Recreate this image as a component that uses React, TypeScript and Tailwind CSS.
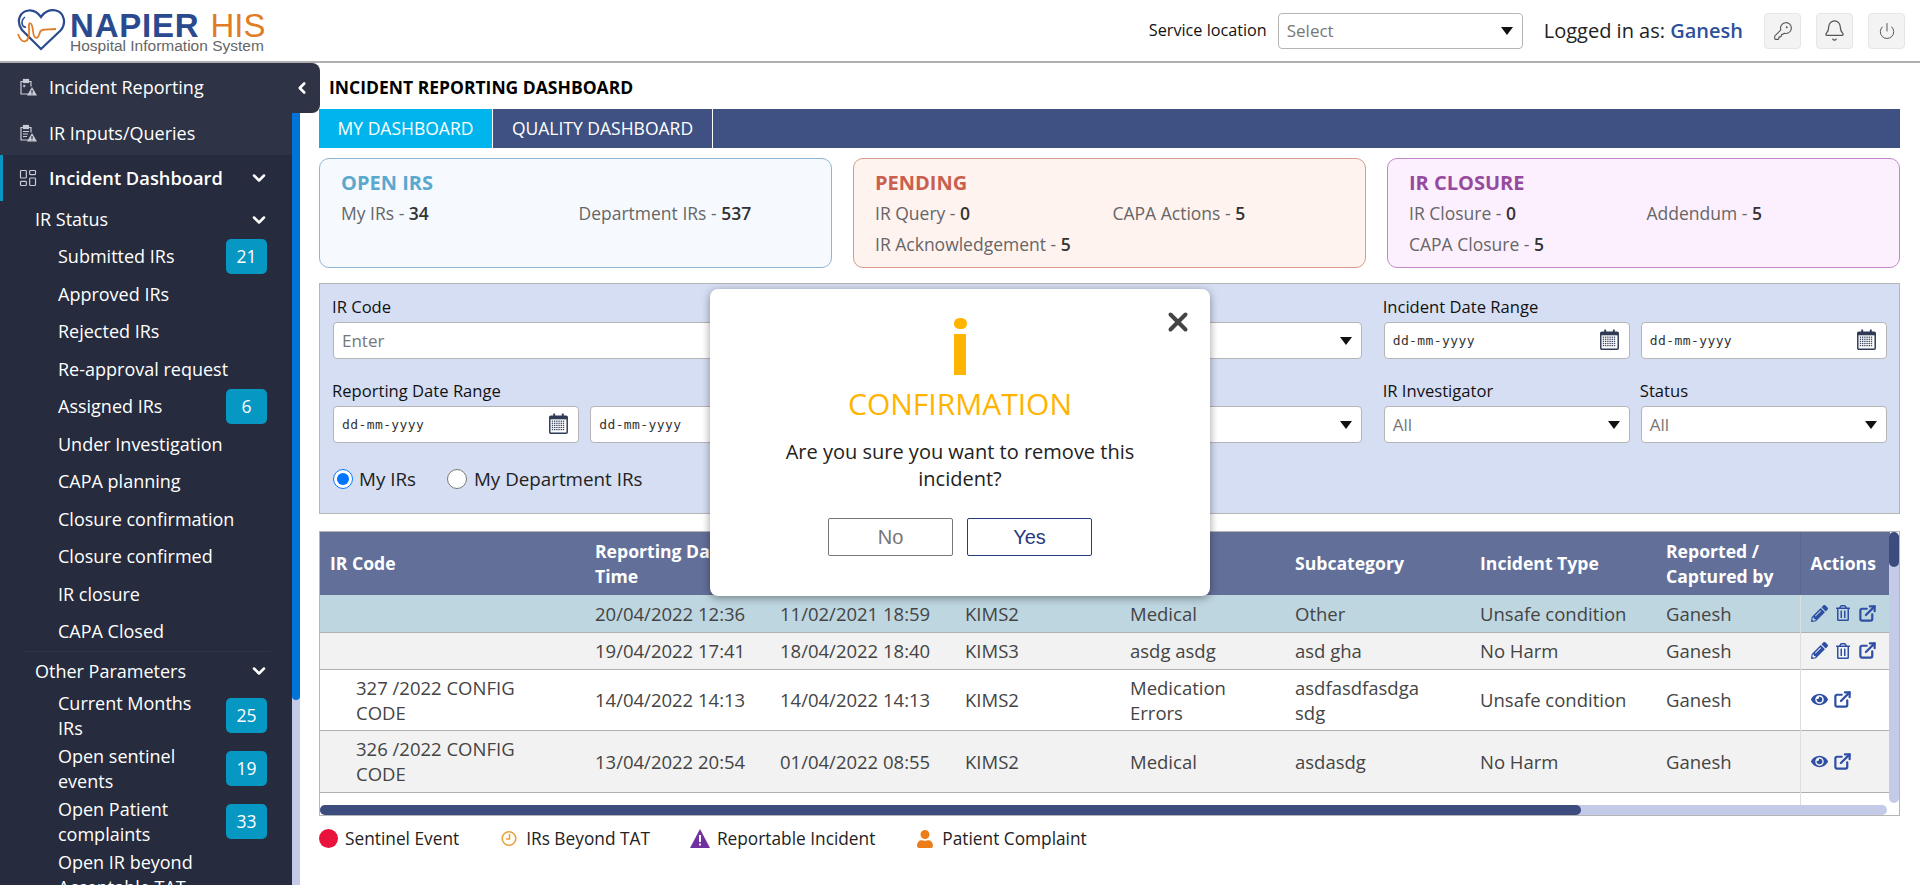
import { Bell, ChevronDown, ChevronLeft, KeyRound, LayoutDashboard, Power, X } from 'lucide-react';
import { FaEye, FaPencilAlt, FaRegTrashAlt, FaUser } from 'react-icons/fa';
import { FiExternalLink } from 'react-icons/fi';

const statusItems = [
  { label: 'Submitted IRs', badge: 21 },
  { label: 'Approved IRs' },
  { label: 'Rejected IRs' },
  { label: 'Re-approval request' },
  { label: 'Assigned IRs', badge: 6 },
  { label: 'Under Investigation' },
  { label: 'CAPA planning' },
  { label: 'Closure confirmation' },
  { label: 'Closure confirmed' },
  { label: 'IR closure' },
  { label: 'CAPA Closed' },
];

const otherItems = [
  { label: 'Current Months IRs', badge: 25 },
  { label: 'Open sentinel events', badge: 19 },
  { label: 'Open Patient complaints', badge: 33 },
  { label: 'Open IR beyond Acceptable TAT' },
];

const rows = [
  { code: '', reported: '20/04/2022 12:36', incident: '11/02/2021 18:59', loc: 'KIMS2', cat: 'Medical', sub: 'Other', type: 'Unsafe condition', bg: 'bg-[#bed6e0] h-[37px]', edit: true },
  { code: '', reported: '19/04/2022 17:41', incident: '18/04/2022 18:40', loc: 'KIMS3', cat: 'asdg asdg', sub: 'asd gha', type: 'No Harm', bg: 'bg-[#f2f2f2] h-[37px]', edit: true },
  { code: '327 /2022 CONFIG CODE', reported: '14/04/2022 14:13', incident: '14/04/2022 14:13', loc: 'KIMS2', cat: 'Medication Errors', sub: 'asdfasdfasdga sdg', type: 'Unsafe condition', bg: 'bg-white h-[61px]', edit: false },
  { code: '326 /2022 CONFIG CODE', reported: '13/04/2022 20:54', incident: '01/04/2022 08:55', loc: 'KIMS2', cat: 'Medical', sub: 'asdasdg', type: 'No Harm', bg: 'bg-[#f2f2f2] h-[62px]', edit: false },
  { code: '325 /2022 CONFIG CODE', reported: '12/04/2022 11:20', incident: '12/04/2022 11:20', loc: 'KIMS2', cat: 'Medical', sub: 'asdasdg', type: 'No Harm', bg: 'bg-white h-[61px]', edit: false },
];

function ClipboardIcon({ lines }: { lines?: boolean }) {
  return (
    <svg width="19" height="19" viewBox="0 0 19 19" fill="none" stroke="#c9ccd6" strokeWidth="1.2">
      <path d="M9 16H2V3.5h10v5" />
      <rect x="4.5" y="1.5" width="5" height="3" fill="#c9ccd6" />
      {lines ? <path d="M4 7.5h6M4 10h5M4 12.5h4" /> : <path d="M4 8h2.5M5.2 6.8v2.4" />}
      <path d="M13 9l5 8.5H8z" fill="#c9ccd6" stroke="none" />
      <path d="M13 12v3M13 15.8v.8" stroke="#2e3345" />
    </svg>
  );
}

function CalendarIcon() {
  const cells = [];
  for (let y = 0; y < 5; y++) {
    for (let x = 0; x < 6; x++) {
      cells.push(<rect key={`${x}-${y}`} x={2.6 + x * 2.1} y={7.2 + y * 2} width="1.3" height="1.2" fill="#3a4560" />);
    }
  }
  return (
    <svg width="19" height="21" viewBox="0 0 18 20" fill="none" className="-mt-[3px]">
      <rect x="0.7" y="3" width="16.6" height="16.3" rx="1" stroke="#2f3a55" strokeWidth="1.4" fill="#fff" />
      <rect x="0.7" y="3" width="16.6" height="3" fill="#2f3a55" />
      <rect x="4" y="0.5" width="1.8" height="4" fill="#2f3a55" />
      <rect x="12.2" y="0.5" width="1.8" height="4" fill="#2f3a55" />
      {cells}
    </svg>
  );
}

function Caret() {
  return (
    <svg width="12" height="8" viewBox="0 0 12 8" className="shrink-0">
      <path d="M0 0h12L6 8z" fill="#111" />
    </svg>
  );
}

function SelectBox({ text, height = 'h-[37px]' }: { text: string; height?: string }) {
  return (
    <div className={`${height} flex items-center justify-between bg-white border border-[#b5b5b5] rounded-[4px] pl-2 pr-[9px] text-[17px] text-[#777]`}>
      <span>{text}</span>
      <Caret />
    </div>
  );
}

function DateBox() {
  return (
    <div className="h-[37px] flex-1 min-w-0 flex items-center justify-between bg-white border border-[#b5b5b5] rounded-[4px] pl-2 pr-[10px]">
      <span className="font-['DejaVu_Sans_Mono',monospace] text-[13px] text-[#333] tracking-[0.4px]">dd-mm-yyyy</span>
      <CalendarIcon />
    </div>
  );
}

function Field({ label, children }: { label: string; children: React.ReactNode }) {
  return (
    <div className="flex flex-col">
      <label className="h-[22px] mb-[4px] -ml-px leading-[22px] text-[16.6px] font-medium text-[#111] whitespace-nowrap">{label}</label>
      {children}
    </div>
  );
}

function SummaryCard({ title, items, cls, titleCls }: { title: string; items: [string, number][]; cls: string; titleCls: string }) {
  return (
    <div className={`h-[110px] rounded-[10px] border pl-[21px] pr-[15px] pt-[11px] ${cls}`}>
      <h2 className={`text-[20px] leading-[26px] font-bold ${titleCls}`}>{title}</h2>
      <div className="grid grid-cols-2 mt-[2px]">
        {items.map(([k, v]) => (
          <p key={k} className="h-[31px] leading-[31px] text-[17.5px] text-[#666] whitespace-nowrap">
            {k} - <b className="font-semibold text-[#333]">{v}</b>
          </p>
        ))}
      </div>
    </div>
  );
}

function SideSubItem({ label, badge }: { label: string; badge?: number }) {
  return (
    <div className="flex items-center justify-between pl-[58px] pr-[25px] min-h-[37.5px] text-[18px] leading-[25px] text-white">
      <span className={badge !== undefined ? 'w-[155px]' : 'w-[205px]'}>{label}</span>
      {badge !== undefined && (
        <span className="w-[41px] h-[35px] flex items-center justify-center rounded-[5px] bg-[#0797c3] text-[17.5px] shrink-0">{badge}</span>
      )}
    </div>
  );
}

function Sidebar() {
  return (
    <aside className="w-[300px] shrink-0 flex flex-col text-white">
      <div className="relative z-10 w-[320px] h-[50px] shrink-0 flex items-center justify-between bg-[#2e3345] rounded-br-[8px] rounded-tr-[8px] pl-[19px] pr-[9px]">
        <div className="flex items-center gap-[11px] text-[18px] -mt-[2px]">
          <ClipboardIcon />
          Incident Reporting
        </div>
        <ChevronLeft size={18} strokeWidth={3.5} />
      </div>
      <div className="flex flex-1 min-h-0">
        <div className="w-[292px] overflow-hidden bg-[#262b3e]">
          <div className="h-[42px] flex items-center gap-[11px] bg-[#2e3345] pl-[19px] text-[18px] pb-[2px]">
            <ClipboardIcon lines />
            IR Inputs/Queries
          </div>
          <div className="h-[46px] flex items-center justify-between border-l-[3px] border-[#0b96c4] pl-[15px] pr-[23px] text-[18.3px] font-semibold">
            <div className="flex items-center gap-[11px]">
              <LayoutDashboard size={20} strokeWidth={1.4} color="#c9ccd6" />
              Incident Dashboard
            </div>
            <ChevronDown size={20} strokeWidth={3} />
          </div>
          <div className="flex items-center justify-between h-[37px] pl-[35px] pr-[23px] text-[18px]">
            IR Status
            <ChevronDown size={20} strokeWidth={3} />
          </div>
          {statusItems.map((i) => (
            <SideSubItem key={i.label} {...i} />
          ))}
          <div className="mx-[22px] border-t border-[#2e3345]" />
          <div className="flex items-center justify-between h-[39px] pl-[35px] pr-[23px] text-[18px]">
            Other Parameters
            <ChevronDown size={20} strokeWidth={3} />
          </div>
          <div className="flex flex-col gap-[3px]">
            {otherItems.map((i) => (
              <SideSubItem key={i.label} {...i} />
            ))}
          </div>
        </div>
        <div className="w-2 flex flex-col bg-[#c3cbe8]">
          <div className="h-[587px] bg-[#0074d9] rounded-b-[4px]" />
        </div>
      </div>
    </aside>
  );
}

function ActionIcons({ edit }: { edit: boolean }) {
  if (edit) {
    return (
      <div className="flex items-center gap-[7px] text-[#2f4fa5]">
        <FaPencilAlt size={17} />
        <FaRegTrashAlt size={16} />
        <FiExternalLink size={19} strokeWidth={2.8} />
      </div>
    );
  }
  return (
    <div className="flex items-center gap-[5px] text-[#2f4fa5]">
      <FaEye size={17} />
      <FiExternalLink size={19} strokeWidth={2.8} />
    </div>
  );
}

function ConfirmModal() {
  return (
    <div className="absolute left-[710px] top-[289px] z-20 w-[500px] h-[307px] bg-white rounded-[8px] shadow-[0_2px_8px_rgba(0,0,0,0.4)] flex flex-col items-center pt-[29px]">
      <button className="absolute right-[17px] top-[18px] text-[#444]">
        <X size={30} strokeWidth={3.2} />
      </button>
      <div className="w-[13px] h-[11px] rounded-full bg-[#ffb400]" />
      <div className="w-[12px] h-[41px] mt-[5px] bg-[#ffb400]" />
      <h3 className="mt-[9px] text-[30px] leading-[40px] text-[#ffb400]">CONFIRMATION</h3>
      <p className="mt-[14px] w-[380px] text-center text-[20px] leading-[27px] text-[#222]">Are you sure you want to remove this incident?</p>
      <div className="flex gap-[14px] mt-[26px] font-['Liberation_Sans',sans-serif] text-[20px]">
        <button className="w-[125px] h-[38px] rounded-[2px] border border-[#777] text-[#777]">No</button>
        <button className="w-[125px] h-[38px] rounded-[2px] border border-[#263a80] text-[#263a80]">Yes</button>
      </div>
    </div>
  );
}

export default function App() {
  return (
    <div className="relative h-[885px] overflow-hidden flex flex-col bg-white font-['Open_Sans',sans-serif]">
      <header className="h-[63px] shrink-0 flex items-center justify-between border-b-[2px] border-[#b0b0b0] pl-[17px] pr-[15px]">
        <div className="flex items-start gap-[4px]">
          <svg width="49" height="42" viewBox="0 0 49 42" fill="none">
            <path d="M24 40L5 21C-2 11 4 2 12 1.5C18 1 21 4 24 8C27 3 33 0 39 1.5C48 4 49 15 44 21Z" stroke="#2a4a8f" strokeWidth="2.2" />
            <path d="M8 8C3 12 5 19 9 18" stroke="#2a4a8f" strokeWidth="1.6" />
            <path d="M1 25C5 36 13 35 12 20C11 12 15 12 16 22C17 31 21 31 23 23C25 19 31 21 39 20" stroke="#e07b26" strokeWidth="1.8" />
          </svg>
          <div className="font-['Liberation_Sans',sans-serif]">
            <div className="flex items-baseline gap-[11px] text-[33px] leading-[33px]">
              <span className="font-bold text-[#2a4a8f] tracking-[0.8px]">NAPIER</span>
              <span className="text-[#e07b26]">HIS</span>
            </div>
            <div className="text-[15.5px] leading-[15px] -mt-[4px] text-[#666]">Hospital Information System</div>
          </div>
        </div>
        <div className="flex items-center">
          <span className="text-[16.2px] font-medium text-[#111]">Service location</span>
          <div className="w-[245px] ml-[11px]">
            <SelectBox text="Select" height="h-[36px]" />
          </div>
          <span className="ml-[21px] text-[20px] text-[#222]">
            Logged in as: <span className="font-semibold text-[#2f4f9a]">Ganesh</span>
          </span>
          <div className="ml-[21px] flex gap-[15px]">
            <div className="w-[37px] h-[36px] flex items-center justify-center rounded-[4px] bg-[#f3f3f3] border border-[#e6e6e6] text-[#555]">
              <KeyRound size={20} strokeWidth={1.3} />
            </div>
            <div className="w-[37px] h-[36px] flex items-center justify-center rounded-[4px] bg-[#f3f3f3] border border-[#e6e6e6] text-[#555]">
              <Bell size={23} strokeWidth={1.3} />
            </div>
            <div className="w-[37px] h-[36px] flex items-center justify-center rounded-[4px] bg-[#f3f3f3] border border-[#e6e6e6] text-[#555]">
              <Power size={18} strokeWidth={1.3} />
            </div>
          </div>
        </div>
      </header>

      <div className="flex flex-1 min-h-0">
        <Sidebar />
        <main className="flex-1 min-w-0 ml-[19px] mr-[20px]">
          <h1 className="h-[46px] pt-[12px] pl-[10px] leading-[24px] text-[17.5px] font-bold text-black">INCIDENT REPORTING DASHBOARD</h1>
          <div className="h-[39px] flex bg-[#3f5182] text-white text-[17.5px]">
            <div className="w-[173px] flex items-center justify-center bg-[#00b5ec]">MY DASHBOARD</div>
            <div className="w-[221px] flex items-center justify-center border-x border-white">QUALITY DASHBOARD</div>
          </div>

          <div className="grid grid-cols-3 gap-[21px] mt-[10px]">
            <SummaryCard title="OPEN IRS" cls="bg-[#f6fafe] border-[#8fb4d4]" titleCls="text-[#5ba8cf]" items={[['My IRs', 34], ['Department IRs', 537]]} />
            <SummaryCard title="PENDING" cls="bg-[#fff3f0] border-[#d89a8a]" titleCls="text-[#c9604e]" items={[['IR Query', 0], ['CAPA Actions', 5], ['IR Acknowledgement', 5]]} />
            <SummaryCard title="IR CLOSURE" cls="bg-[#fdf0fe] border-[#c488c8]" titleCls="text-[#964a9e]" items={[['IR Closure', 0], ['Addendum', 5], ['CAPA Closure', 5]]} />
          </div>

          <section className="h-[231px] mt-[15px] bg-[#d6def3] border border-[#b5b5b5] pl-[13px] pr-[12px] pt-[12px]">
            <div className="grid grid-cols-3 gap-x-[22px] gap-y-[21px]">
              <Field label="IR Code">
                <input placeholder="Enter" className="h-[37px] w-full bg-white border border-[#b5b5b5] rounded-[4px] px-2 text-[17px] placeholder:text-[#777]" />
              </Field>
              <Field label="Location">
                <SelectBox text="All" />
              </Field>
              <Field label="Incident Date Range">
                <div className="flex gap-[11px]">
                  <DateBox />
                  <DateBox />
                </div>
              </Field>
              <Field label="Reporting Date Range">
                <div className="flex gap-[11px]">
                  <DateBox />
                  <DateBox />
                </div>
              </Field>
              <Field label="Category">
                <SelectBox text="All" />
              </Field>
              <div className="flex gap-[11px]">
                <div className="flex-1 min-w-0">
                  <Field label="IR Investigator">
                    <SelectBox text="All" />
                  </Field>
                </div>
                <div className="flex-1 min-w-0">
                  <Field label="Status">
                    <SelectBox text="All" />
                  </Field>
                </div>
              </div>
            </div>
            <div className="flex items-center mt-[22px] text-[18.8px] text-[#222]">
              <input type="radio" name="scope" defaultChecked className="w-[20px] h-[20px] m-0 accent-[#0075ff]" />
              <span className="ml-[6px]">My IRs</span>
              <input type="radio" name="scope" className="w-[20px] h-[20px] ml-[31px] accent-[#0075ff]" />
              <span className="ml-[7px]">My Department IRs</span>
            </div>
          </section>

          <div className="relative h-[285px] mt-[17px] border border-[#b5b5b5] overflow-hidden">
            <table className="w-[1570px] table-fixed border-collapse text-[18.5px] leading-[25px] text-[#444]">
              <colgroup>
                <col className="w-[264px]" />
                <col className="w-[185px]" />
                <col className="w-[185px]" />
                <col className="w-[165px]" />
                <col className="w-[165px]" />
                <col className="w-[185px]" />
                <col className="w-[186px]" />
                <col className="w-[145px]" />
                <col className="w-[90px]" />
              </colgroup>
              <thead>
                <tr className="h-[63px] bg-[#626f99] text-white text-left text-[17.6px]">
                  {['IR Code', 'Reporting Date & Time', 'Incident Date & Time', 'Location', 'Category', 'Subcategory', 'Incident Type', 'Reported / Captured by'].map((h, i) => (
                    <th key={h} className={`font-bold ${i === 0 ? 'px-[10px]' : 'px-[11px]'}`}>{h}</th>
                  ))}
                  <th className="px-[10px] font-bold border-l border-[#5a6790]">Actions</th>
                </tr>
              </thead>
              <tbody>
                {rows.map((r) => (
                  <tr key={r.reported} className={`${r.bg} border-b border-[#b0b0b0]`}>
                    <td className="pl-[36px] pr-[50px] align-middle">{r.code}</td>
                    <td className="px-[11px] whitespace-nowrap">{r.reported}</td>
                    <td className="px-[11px] whitespace-nowrap">{r.incident}</td>
                    <td className="px-[11px]">{r.loc}</td>
                    <td className="px-[11px]">{r.cat}</td>
                    <td className="pl-[11px] pr-[24px]">{r.sub}</td>
                    <td className="px-[11px] whitespace-nowrap">{r.type}</td>
                    <td className="px-[11px]">Ganesh</td>
                    <td className="px-[10px] border-l border-[#dedede]">
                      <ActionIcons edit={r.edit} />
                    </td>
                  </tr>
                ))}
              </tbody>
            </table>
            {/* custom scrollbars sit on top of the table */}
            <div className="absolute right-0 top-0 bottom-[12px] w-[10px] rounded-[5px] bg-[#c3cbe8]">
              <div className="h-[35px] rounded-[5px] bg-[#3c4c7e]" />
            </div>
            <div className="absolute left-0 right-[12px] bottom-0 h-[10px] rounded-[5px] bg-[#c3cbe8]">
              <div className="w-[1261px] h-full rounded-[5px] bg-[#3c4c7e]" />
            </div>
          </div>

          <div className="flex items-center h-[23px] mt-[11px] text-[17.3px] text-[#222]">
            <span className="w-[19px] h-[19px] rounded-full bg-[#e8123c]" />
            <span className="ml-[7px]">Sentinel Event</span>
            <svg className="ml-[42px]" width="16" height="17" viewBox="0 0 16 17" fill="none" stroke="#e8a33d" strokeWidth="1.6">
              <circle cx="8" cy="8.5" r="6.8" />
              <path d="M8.5 4v5H5" />
            </svg>
            <span className="ml-[9px]">IRs Beyond TAT</span>
            <svg className="ml-[40px]" width="20" height="19" viewBox="0 0 20 19">
              <path d="M10 0l10 19H0z" fill="#7030a0" />
              <path d="M10 6v7M10 14.5v2" stroke="#fff" strokeWidth="2" />
            </svg>
            <span className="ml-[7px]">Reportable Incident</span>
            <FaUser className="ml-[41px]" size={18} color="#ed7d1a" />
            <span className="ml-[8px]">Patient Complaint</span>
          </div>
        </main>
      </div>

      <ConfirmModal />
    </div>
  );
}
